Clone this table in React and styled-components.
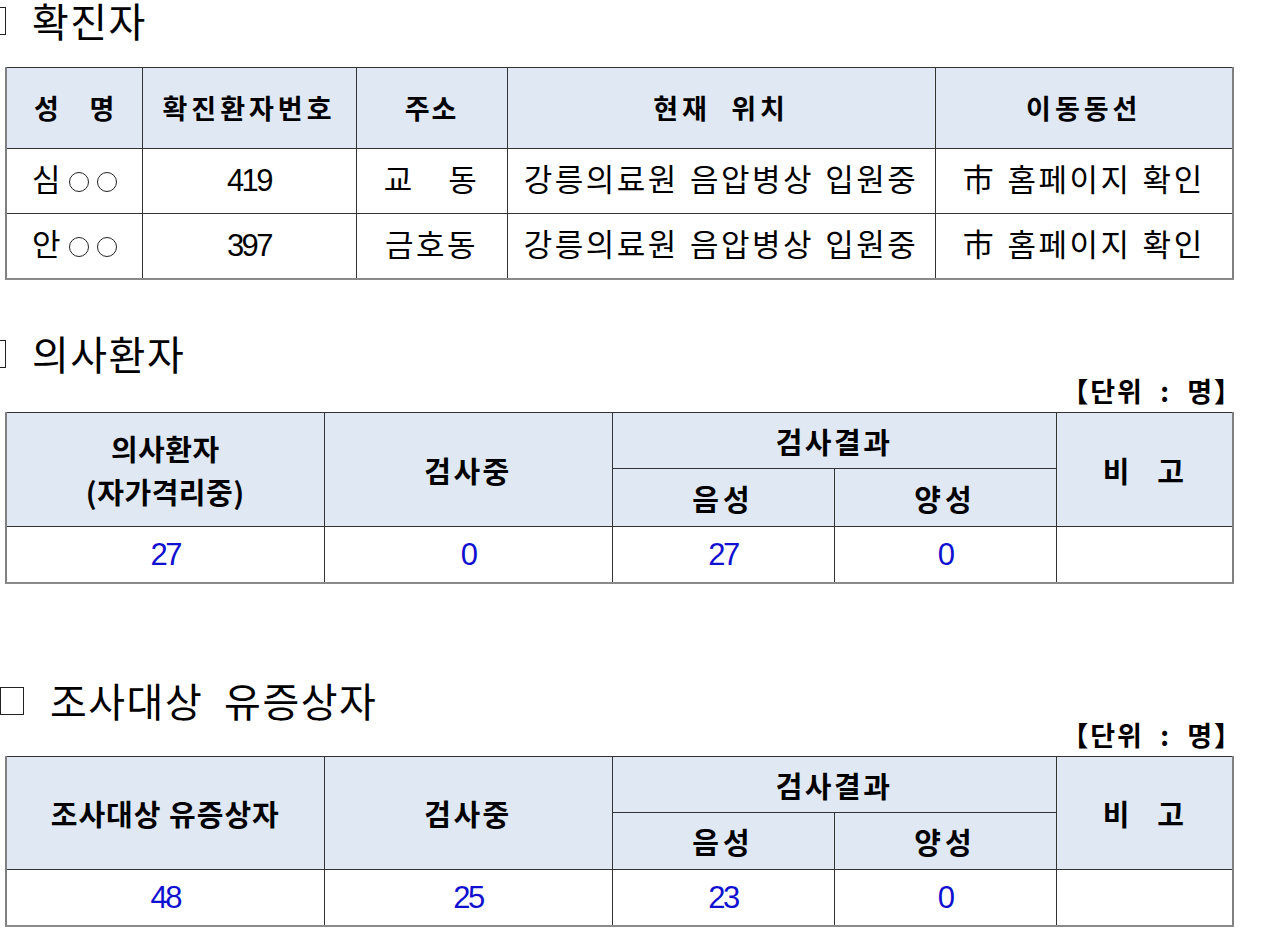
import React from "react";
import styled, { createGlobalStyle } from "styled-components";

const Global = createGlobalStyle`
  html, body { margin: 0; padding: 0; background: #ffffff; }
  body { font-family: "Liberation Sans", "Noto Sans CJK KR", sans-serif; color: #000; }
`;

const Page = styled.div`
  width: 1280px;
  height: 939px;
  overflow: hidden;
  padding-left: 5px;
  box-sizing: border-box;
`;

const Section = styled.section`
  margin-top: ${(p) => p.$top}px;
`;

const Title = styled.h2`
  margin: 0 0 0 ${(p) => p.$shift}px;
  font-family: "Noto Sans CJK KR", sans-serif;
  font-weight: 400;
  font-size: 40px;
  letter-spacing: 1.5px;
  line-height: 40px;
  height: 40px;
  white-space: pre;
  display: flex;
  align-items: center;
  gap: 26px;
`;

const Box = styled.span`
  display: inline-block;
  flex: none;
  width: 24px;
  height: 28px;
  border: 1.5px solid #222;
  box-sizing: border-box;
  margin-top: 2px;
`;

const Unit = styled.div`
  width: 1238px;
  text-align: right;
  font-family: "Noto Sans CJK KR", sans-serif;
  font-weight: 700;
  font-size: 27px;
  letter-spacing: 2px;
  line-height: 24px;
  margin-top: ${(p) => p.$top}px;
  white-space: pre;
`;

const Table = styled.table`
  width: 1227px;
  border-collapse: collapse;
  table-layout: fixed;
  margin-top: ${(p) => p.$top}px;
  border-top: 1px solid #333;
  border-left: 2px solid #808080;
  border-right: 2px solid #808080;
  border-bottom: 2px solid #8a8a8a;
`;

const Th = styled.th`
  background: #dfe8f3;
  border: 1px solid #333;
  font-family: "Noto Sans CJK KR", sans-serif;
  font-weight: 700;
  font-size: ${(p) => p.$fs ?? 27}px;
  line-height: ${(p) => p.$lh ?? 40}px;
  letter-spacing: ${(p) => p.$ls ?? 2}px;
  text-align: center;
  vertical-align: middle;
  padding: 0;
  height: ${(p) => p.$h}px;
  white-space: pre;
`;

const Td = styled.td`
  border: 1px solid #333;
  font-size: 31px;
  line-height: 32px;
  letter-spacing: ${(p) => p.$ls ?? 2.5}px;
  text-align: center;
  vertical-align: middle;
  padding: 0;
  height: ${(p) => p.$h}px;
  white-space: pre;
  color: ${(p) => (p.$blue ? "#1010d0" : "#000")};
`;

const Num = styled.span`
  font-family: "Liberation Sans", sans-serif;
  font-size: 31px;
  letter-spacing: -2.5px;
`;

const Circle = styled.span`
  display: inline-block;
  width: 20px;
  height: 20px;
  border: 1.3px solid #222;
  border-radius: 50%;
  box-sizing: border-box;
  margin-left: 8px;
  vertical-align: -1px;
`;

const Masked = ({ first }) => (
  <>
    {first}
    <Circle />
    <Circle />
  </>
);

const patients = [
  { name: "심", no: "419", addr: "교   동", loc: "강릉의료원 음압병상 입원중", route: "市 홈페이지 확인" },
  { name: "안", no: "397", addr: "금호동", loc: "강릉의료원 음압병상 입원중", route: "市 홈페이지 확인" },
];

const SummaryTable = ({ firstHead, firstLs, values, top, rowH }) => (
  <Table $top={top}>
    <colgroup>
      <col style={{ width: 318 }} />
      <col style={{ width: 288 }} />
      <col style={{ width: 222 }} />
      <col style={{ width: 222 }} />
      <col style={{ width: 177 }} />
    </colgroup>
    <thead>
      <tr>
        <Th rowSpan={2} $fs={29} $lh={43} $ls={firstLs}>{firstHead}</Th>
        <Th rowSpan={2} $fs={29} $ls={2.5}>검사중</Th>
        <Th colSpan={2} $h={rowH[0]} $fs={29} $ls={2.5}>검사결과</Th>
        <Th rowSpan={2} $fs={29} $ls={2}>{"비   고"}</Th>
      </tr>
      <tr>
        <Th $h={rowH[1]} $fs={29} $ls={4}>음성</Th>
        <Th $h={rowH[1]} $fs={29} $ls={4}>양성</Th>
      </tr>
    </thead>
    <tbody>
      <tr>
        {values.map((v, i) => (
          <Td key={i} $h={rowH[2]} $blue>
            <Num>{v}</Num>
          </Td>
        ))}
        <Td $h={rowH[2]} />
      </tr>
    </tbody>
  </Table>
);

export default function App() {
  return (
    <Page>
      <Global />
      <Section $top={0}>
        <Title $shift={-23}>
          <Box />
          확진자
        </Title>
        <Table $top={27}>
          <colgroup>
            <col style={{ width: 136 }} />
            <col style={{ width: 214 }} />
            <col style={{ width: 151 }} />
            <col style={{ width: 428 }} />
            <col style={{ width: 298 }} />
          </colgroup>
          <thead>
            <tr>
              <Th $h={80} $ls={0}>{"성     명"}</Th>
              <Th $h={80} $ls={4}>확진환자번호</Th>
              <Th $h={80} $ls={2}>주소</Th>
              <Th $h={80} $ls={4}>{"현재  위치"}</Th>
              <Th $h={80} $ls={4}>이동동선</Th>
            </tr>
          </thead>
          <tbody>
            {patients.map((p) => (
              <tr key={p.no}>
                <Td $h={64} $ls={0}>
                  <Masked first={p.name} />
                </Td>
                <Td $h={64}>
                  <Num>{p.no}</Num>
                </Td>
                <Td $h={64}>{p.addr}</Td>
                <Td $h={64}>{p.loc}</Td>
                <Td $h={64}>{p.route}</Td>
              </tr>
            ))}
          </tbody>
        </Table>
      </Section>

      <Section $top={53}>
        <Title $shift={-23}>
          <Box />
          의사환자
        </Title>
        <Unit $top={6}>{"【단위  :  명】"}</Unit>
        <SummaryTable
          top={9}
          firstHead={"의사환자\n(자가격리중)"}
          firstLs={0.5}
          values={["27", "0", "27", "0"]}
          rowH={[55, 57, 55]}
        />
      </Section>

      <Section $top={96}>
        <Title $shift={-5}>
          <Box />
          {"조사대상  유증상자"}
        </Title>
        <Unit $top={3}>{"【단위  :  명】"}</Unit>
        <SummaryTable
          top={9}
          firstHead={"조사대상 유증상자"}
          firstLs={1}
          values={["48", "25", "23", "0"]}
          rowH={[55, 56, 55]}
        />
      </Section>
    </Page>
  );
}
